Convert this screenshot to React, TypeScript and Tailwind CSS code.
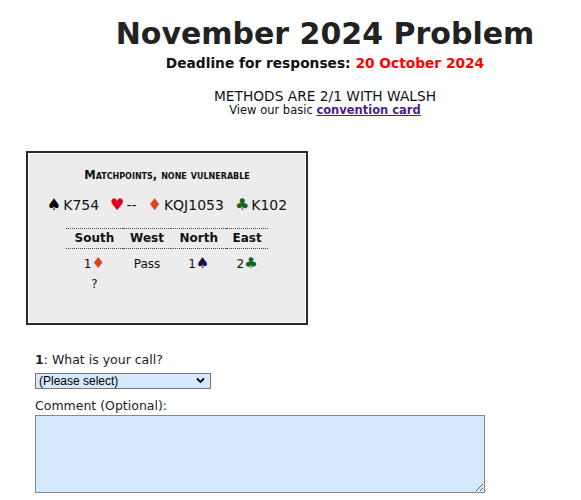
import React from 'react';

const bids = [
  { who: 'South', bid: <>1<span className="text-[15px] text-[#d9441c]">♦</span></> },
  { who: 'West', bid: <>Pass</> },
  { who: 'North', bid: <>1<span className="text-[15px] text-[#1c1050]">♠</span></> },
  { who: 'East', bid: <>2<span className="text-[15px] text-[#16651c]">♣</span></> },
];

const hand = [
  { suit: '♠', color: 'text-black', cards: 'K754' },
  { suit: '♥', color: 'text-[#e0001b]', cards: '--' },
  { suit: '♦', color: 'text-[#d9441c]', cards: 'KQJ1053' },
  { suit: '♣', color: 'text-[#16651c]', cards: 'K102' },
];

const App: React.FC = () => {
  return (
    <div className="min-h-[500px] bg-white font-['DejaVu_Sans',Verdana,sans-serif] text-[#111]">
      {/* Header */}
      <div className="pl-[69px] pt-[14px] text-center">
        <h1 className="text-[30px] font-bold leading-[40px] text-[#222]">November 2024 Problem</h1>
        <p className="text-[13.75px] font-bold leading-[18px]">
          Deadline for responses: <span className="text-[#ff0000]">20 October 2024</span>
        </p>
        <p className="mt-[18px] text-[13.75px] leading-[13px]">METHODS ARE 2/1 WITH WALSH</p>
        <p className="mt-[1px] text-[11.5px] leading-[13px]">
          View our basic{' '}
          <a href="#" className="font-bold text-[#4b1d8f] underline">convention card</a>
        </p>
      </div>

      {/* Problem box */}
      <div className="ml-[26px] mt-[34px] h-[174px] w-[282px] border-2 border-[#2a2a2a] bg-[#ececec] text-center shadow-[inset_1px_1px_0_#fff,inset_-1px_-1px_0_#fff]">
        <p className="mt-[14px] text-[11.5px] font-bold leading-[16px] [font-variant:small-caps]">
          Matchpoints, none vulnerable
        </p>
        <div className="mt-[12px] flex justify-center gap-[11px] text-[14px] leading-[20px]">
          {hand.map(h => (
            <span key={h.suit} className="flex items-baseline gap-[2px]">
              <span className={`text-[16px] ${h.color}`}>{h.suit}</span>
              {h.cards}
            </span>
          ))}
        </div>
        <table className="mx-auto mt-[13px] w-[202px] border-collapse text-[12px]">
          <thead>
            <tr className="border-y border-dotted border-[#444]">
              {bids.map(b => (
                <th key={b.who} className="px-0 py-[2px] font-bold leading-[15px]">{b.who}</th>
              ))}
            </tr>
          </thead>
          <tbody>
            <tr>
              {bids.map(b => (
                <td key={b.who} className="pt-[6px] leading-[17px]">{b.bid}</td>
              ))}
            </tr>
            <tr>
              <td className="pt-[3px] leading-[16px]">?</td>
              <td /><td /><td />
            </tr>
          </tbody>
        </table>
      </div>

      {/* Form */}
      <div className="ml-[35px] mt-[27px]">
        <p className="text-[12.5px] leading-[16px] text-[#222]">
          <span className="font-bold">1</span>: What is your call?
        </p>
        <div className="relative mt-[5px] w-[176px]">
          <select className="block h-[16px] w-[176px] appearance-none border border-[#777] bg-[#d5e9fd] pl-[3px] font-['Liberation_Sans',Arial,sans-serif] text-[12px] leading-[14px] text-black">
            <option>(Please select)</option>
          </select>
          <svg className="pointer-events-none absolute right-[6px] top-[4px]" width="9" height="7" viewBox="0 0 9 7">
            <path d="M1 1.5l3.5 3.5 3.5-3.5" fill="none" stroke="#000" strokeWidth="1.8" />
          </svg>
        </div>
        <p className="mt-[9px] text-[12.5px] leading-[16px] text-[#222]">Comment (Optional):</p>
        <textarea className="mt-[1px] block h-[78px] w-[450px] border border-[#888] bg-[#d5e9fd]" />
      </div>
    </div>
  );
};

export default App;
